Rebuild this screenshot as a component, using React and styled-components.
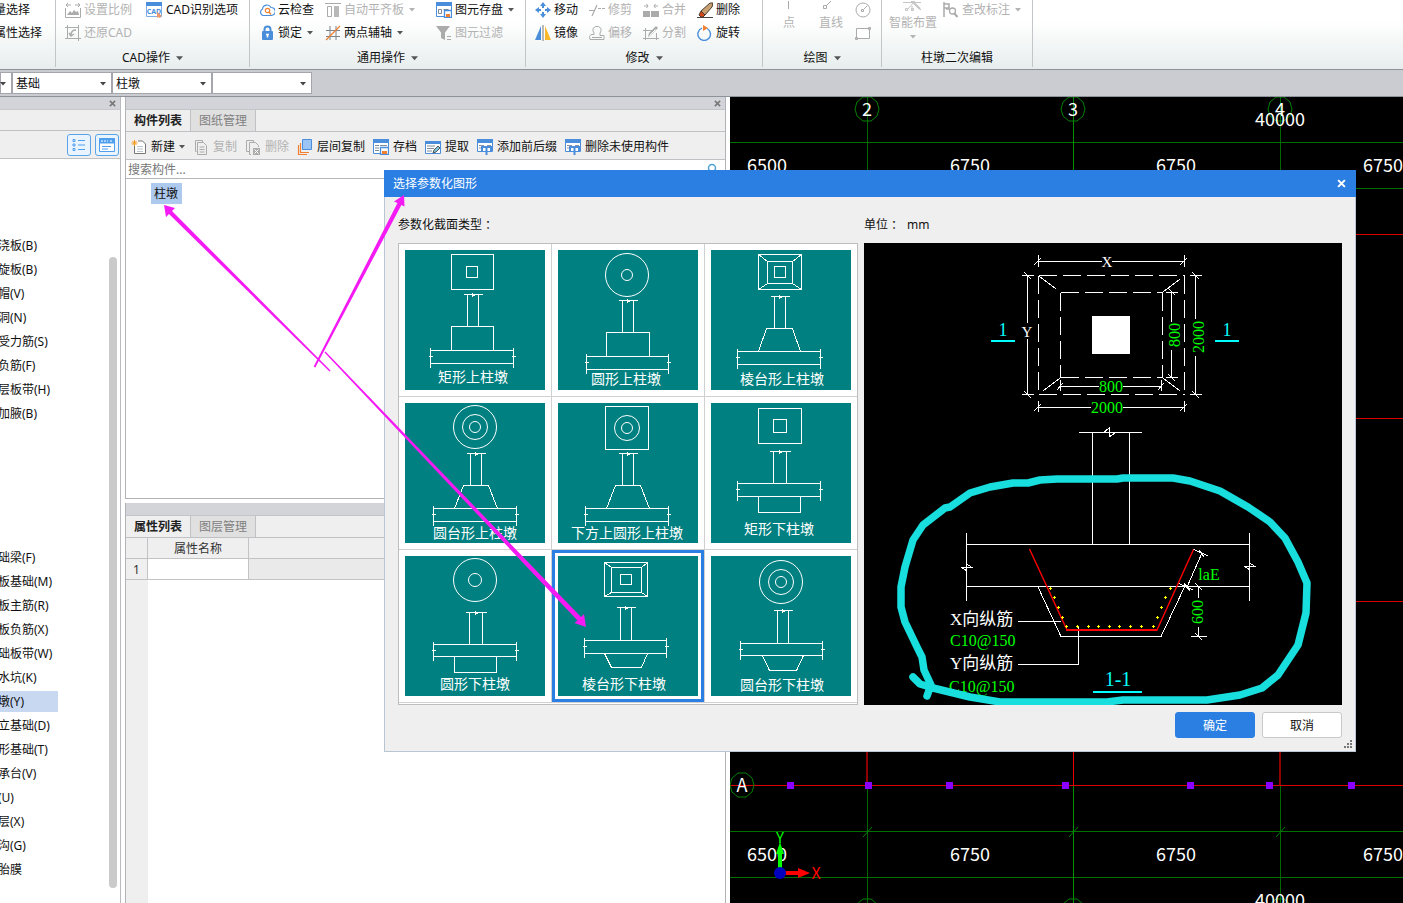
import React, { useState } from "react";
import styled, { createGlobalStyle, css } from "styled-components";

const GlobalStyle = createGlobalStyle`
  * {
    box-sizing: border-box;
  }
  body {
    margin: 0;
    font-family: "Noto Sans", "Noto Sans CJK SC", sans-serif;
    font-size: 12px;
    line-height: 18px;
    color: #111;
  }
  button, select, input {
    font: inherit;
    color: inherit;
  }
`;

const Shell = styled.div`
  position: relative;
  display: flex;
  flex-direction: column;
  height: 100vh;
  overflow: hidden;
  background: #fff;
`;

/* ribbon */
const Ribbon = styled.header`
  display: flex;
  height: 70px;
  flex: none;
  background: linear-gradient(#fff 30%, #e7eded);
  border-bottom: 1px solid #8e9196;
`;
const Group = styled.section`
  display: flex;
  flex-direction: column;
  justify-content: space-between;
  flex: none;
  width: ${(p) => p.$width}px;
  height: 67px;
  padding-top: 1px;
  border-right: 1px solid #c3c6c8;
  overflow: hidden;
`;
const GroupColumns = styled.div`
  display: flex;
  gap: ${(p) => p.$gap || 0}px;
  padding-left: ${(p) => p.$pad}px;
`;
const Column = styled.div`
  display: flex;
  flex-direction: column;
  align-items: ${(p) => (p.$center ? "center" : "flex-start")};
  gap: 5px;
  margin-right: ${(p) => p.$after || 0}px;
`;
const Tool = styled.button`
  display: flex;
  align-items: center;
  gap: ${(p) => p.$gap || 3}px;
  height: 18px;
  padding: 0;
  border: 0;
  background: none;
  white-space: nowrap;
  color: #111;
  &:disabled {
    color: #b2b2b2;
  }
`;
const CutTool = styled(Tool)`
  margin-left: -6px;
`;
const TallTool = styled(Tool)`
  flex-direction: column;
  gap: 3px;
  height: 42px;
`;
const GroupTitle = styled.div`
  display: flex;
  justify-content: center;
  align-items: center;
  gap: 6px;
  height: 18px;
  white-space: nowrap;
`;

/* floor / component selectors */
const SelectorBar = styled.div`
  display: flex;
  align-items: center;
  flex: none;
  height: 27px;
  background: #caccd1;
  border-bottom: 1px solid #8e9299;
`;
const SelectWrap = styled.label`
  position: relative;
  width: ${(p) => p.$width}px;
  svg {
    position: absolute;
    right: 6px;
    top: 10px;
    pointer-events: none;
  }
`;
const Select = styled.select`
  appearance: none;
  display: block;
  width: 100%;
  height: 22px;
  padding: 2px 3px 0;
  border: 1px solid #a4a6ab;
  border-radius: 0;
  background: #fff;
`;

/* workspace */
const Workspace = styled.main`
  display: flex;
  gap: 4px;
  flex: 1;
  min-height: 0;
`;
const Caption = styled.div`
  display: flex;
  align-items: center;
  justify-content: flex-end;
  flex: none;
  height: 12px;
  padding-right: 4px;
  background: #d3d4da;
`;
const CloseButton = styled.button`
  display: flex;
  padding: 0;
  border: 0;
  background: none;
`;
const Nav = styled.nav`
  display: flex;
  flex-direction: column;
  flex: none;
  width: 121px;
  border-right: 1px solid #b9bbc0;
`;
const NavHead = styled.div`
  flex: none;
  height: 22px;
  background: #efefef;
  border-top: 1px solid #c9c9cc;
  border-bottom: 1px solid #bfc1c5;
`;
const NavTools = styled.div`
  display: flex;
  justify-content: flex-end;
  align-items: center;
  gap: 4px;
  flex: none;
  height: 28px;
  padding-right: 1px;
  background: #efefef;
  border-bottom: 1px solid #bfc1c5;
`;
const ViewButton = styled.button`
  display: flex;
  align-items: center;
  justify-content: center;
  width: 24px;
  height: 22px;
  padding: 0;
  border: 1px solid #5aa4ea;
  border-radius: 3px;
  background: #eaf4fe;
`;
const NavBody = styled.div`
  display: flex;
  flex: 1;
  min-height: 0;
  padding-right: 3px;
  overflow: hidden;
`;
const NavLists = styled.div`
  flex: 1;
  padding-top: 74px;
`;
const NavList = styled.ul`
  margin: 0 0 120px;
  padding: 0;
  list-style: none;
`;
const NavItem = styled.li`
  display: flex;
  align-items: center;
  height: 24px;
  a {
    padding-right: ${(p) => (p.$active ? 34 : 0)}px;
    margin-left: -2px;
    line-height: 21px;
    color: #111;
    white-space: nowrap;
    text-decoration: none;
    background: ${(p) => (p.$active ? "#c8d8f0" : "none")};
  }
`;
const ScrollThumb = styled.div`
  width: 8px;
  margin: 98px 0 15px;
  border-radius: 4px;
  background: #cacaca;
`;

const Middle = styled.div`
  display: grid;
  grid-template-rows: 402fr 400fr;
  gap: 4px;
  flex: none;
  width: 601px;
`;
const Panel = styled.section`
  display: flex;
  flex-direction: column;
  min-height: 0;
  border: solid #b0b2b6;
  border-width: 0 1px ${(p) => (p.$closed ? 1 : 0)}px 1px;
`;
const Tabs = styled.div`
  display: flex;
  flex: none;
  height: 23px;
  background: #efefef;
  border-top: 1px solid #c3c6c9;
  border-bottom: 1px solid #bfc1c5;
`;
const Tab = styled.button`
  width: 65px;
  padding: 0;
  border: 0;
  border-right: 1px solid #bfc1c5;
  background: ${(p) => (p.$active ? "#efefef" : "#e0e0e0")};
  color: ${(p) => (p.$active ? "#222" : "#808080")};
  font-weight: ${(p) => (p.$active ? 700 : 400)};
`;
const ListTools = styled.div`
  display: flex;
  align-items: center;
  gap: 8px;
  flex: none;
  height: 28px;
  padding: 2px 0 0 5px;
  background: #efefef;
  border-bottom: 1px solid #bfc1c5;
`;
const SearchRow = styled.label`
  display: flex;
  align-items: center;
  flex: none;
  height: 19px;
  padding: 0 7px 0 2px;
  border-bottom: 1px solid #b4b6ba;
`;
const SearchInput = styled.input`
  flex: 1;
  height: 18px;
  padding: 2px 0 0;
  border: 0;
  outline: 0;
  &::placeholder {
    color: #777;
  }
`;
const Tree = styled.div`
  flex: 1;
  padding: 4px 25px;
`;
const TreeItem = styled.button`
  height: 21px;
  padding: 0 4px 0 3px;
  border: 0;
  background: #adc9ee;
`;
const PropertyArea = styled.div`
  flex: 1;
  background: linear-gradient(to right, #efefef 22px, #fff 22px);
`;
const PropertyTable = styled.table`
  width: 100%;
  table-layout: fixed;
  border-collapse: separate;
  border-spacing: 0;
  th, td {
    height: 21px;
    padding: 2px 0 0;
    border-right: 1px solid #c3c3c5;
    border-bottom: 1px solid #c3c3c5;
    font-weight: 400;
    line-height: 18px;
    color: #333;
  }
  th {
    background: #efefef;
  }
  td {
    background: #fff;
  }
  th:last-child, td:last-child {
    border-right: 0;
  }
  td:last-child {
    background: #eaeaea;
  }
`;

const Viewport = styled.div`
  flex: 1;
  min-width: 0;
  background: #000;
  overflow: hidden;
  svg {
    display: block;
  }
`;

/* dialog */
const Dialog = styled.div`
  position: absolute;
  left: 384px;
  right: 47px;
  top: 170px;
  background: #efefef;
  border: solid #b9c5d3;
  border-width: 0 1px 1px;
`;
const DialogTitle = styled.div`
  display: flex;
  align-items: center;
  justify-content: space-between;
  height: 27px;
  margin: 0 -1px;
  padding: 0 10px 0 9px;
  background: #2c7fe2;
  color: #fff;
`;
const DialogBody = styled.div`
  display: flex;
  gap: 6px;
  padding: 19px 13px 0;
`;
const Side = styled.div`
  flex: ${(p) => (p.$grow ? "1" : "none")};
  min-width: 0;
`;
const SideLabel = styled.div`
  display: flex;
  margin-bottom: 9px;
`;
const Colon = styled.span`
  margin-right: 7px;
  font-family: "Noto Sans CJK JP", sans-serif;
`;
const Gallery = styled.div`
  display: grid;
  grid-template-columns: 153px 153px 152px;
  padding-bottom: 1px;
  border: 1px solid #bdbdbd;
  background: #fff;
`;
const Shape = styled.button`
  display: block;
  height: 153px;
  padding: 6px;
  border: solid #d0d0d0;
  border-width: 0 1px 1px 0;
  background: #fff;
  text-align: left;
  &:nth-child(3n) {
    border-right: 0;
  }
  ${(p) =>
    p.$selected &&
    css`
      box-shadow: inset 0 0 0 3px #2c7fe2;
    `}
  svg {
    display: block;
    background: #008080;
  }
`;
const Preview = styled.div`
  height: 462px;
  background: #000;
  svg {
    display: block;
    margin: 0 auto;
  }
`;
const DialogFooter = styled.div`
  display: flex;
  justify-content: flex-end;
  gap: 7px;
  padding: 7px 13px 13px;
`;
const DialogButton = styled.button`
  width: 80px;
  height: 26px;
  padding: 2px 0 0;
  border: 1px solid ${(p) => (p.$primary ? "#2c7fe2" : "#c9c9c9")};
  border-radius: 3px;
  background: ${(p) => (p.$primary ? "#2c7fe2" : "#fff")};
  color: ${(p) => (p.$primary ? "#fff" : "#111")};
`;
const Grip = styled.svg`
  position: absolute;
  right: 3px;
  bottom: 3px;
`;
const Notes = styled.svg`
  position: absolute;
  left: 0;
  top: 0;
  pointer-events: none;
`;

const CaretSvg = styled.svg`
  flex: none;
  margin-left: ${(p) => p.$space}px;
`;

const Caret = ({ color = "#555", size = 6, space = 0 }) => (
  <CaretSvg $space={space} width={size} height={size - 2} viewBox="0 0 6 4">
    <path d="M0 0h6L3 3.500z" fill={color} />
  </CaretSvg>
);

const Cross = ({ color = "#777", size = 7 }) => (
  <svg width={size} height={size} viewBox="0 0 8 8">
    <path d="M1 1l6 6M7 1L1 7" stroke={color} strokeWidth="1.8" />
  </svg>
);

const BLUE = "#4a8edb";
const GREY = "#ababab";
const ORANGE = "#f08030";

const windowFrame = (
  <>
    <path d="M.5 3v11.500h15V3" fill="#fff" stroke={BLUE} />
    <path d="M0 0h16v4H0z" fill={BLUE} />
  </>
);

const icons = {
  scale: (
    <>
      <path d="M1 3h5M3 1L1 3l2 2M15 3h-5M13 1l2 2-2 2" stroke={GREY} />
      <path d="M.5 6v9.500h15V6" stroke={GREY} />
      <path d="M2 13l3-4 2 2 2-3 2 2 2-1 1 4z" fill={GREY} />
    </>
  ),
  restore: (
    <>
      <path d="M2.500 0v13.500H16M0 2.500h13.500V16M0 13.500h4M13.500 0v3" stroke={GREY} />
      <path d="M11 5c-3 0-5 2-5 5M4 8l2 3 3-2" stroke={GREY} strokeWidth="1.500" />
    </>
  ),
  cad: (
    <>
      <path d="M.5 4v10.500h15V4" fill="#fff" stroke="#7faee6" />
      <path d="M0 0h16v4H0z" fill={BLUE} />
      <text x="8" y="12" fontSize="7" fontWeight="700" textAnchor="middle" fill={BLUE}>CAD</text>
      <path d="M11 10l5 4-2 .5 1 2-1 .5-1-2-2 1z" fill="#f0946a" />
    </>
  ),
  cloud: (
    <>
      <path d="M4 13.500a3.500 3.500 0 0 1-.5-6.500 4.500 4.500 0 0 1 8.500-1.500 4 4 0 0 1 .5 8z" stroke={BLUE} strokeWidth="1.200" />
      <circle cx="8.500" cy="8.500" r="2.200" stroke={ORANGE} strokeWidth="1.200" />
      <path d="M10 10l2 2.500" stroke={ORANGE} strokeWidth="1.300" />
    </>
  ),
  lock: (
    <>
      <path d="M5.500 7V4.500a3 3 0 0 1 6 0V7" stroke={BLUE} strokeWidth="2" />
      <rect x="3" y="6" width="11" height="9" rx="1" fill={BLUE} />
      <path d="M8.500 9v3.500M7 9.500h3" stroke="#fff" strokeWidth="1.500" />
    </>
  ),
  align: (
    <>
      <path d="M0 1.500h16M2.500 4.500h4v10h-4z" stroke={GREY} />
      <path d="M9 4h5v11H9z" fill="#b9b9b9" />
    </>
  ),
  axis: (
    <>
      <path d="M5 1v14M11 1v14M1 5.500h14M1 11.500h14" stroke="#7a828c" />
      <path d="M1 15L15 1" stroke={ORANGE} strokeWidth="1.300" />
    </>
  ),
  store: (
    <>
      {windowFrame}
      <path d="M2.500 7.500h3v4h-3zM7.500 7.500h5" stroke="#7c8b9a" />
      <path d="M8.500 8.500h7v7h-7z" fill="#fff" stroke={BLUE} strokeWidth="1.300" />
      <path d="M10 12h4v3h-4z" fill={ORANGE} />
    </>
  ),
  filter: (
    <>
      <path d="M0 1h14L9 7.500V15l-4-2V7.500z" fill={GREY} />
      <path d="M11 11.500h4M11 14.500h4" stroke={GREY} />
    </>
  ),
  move: (
    <>
      <path d="M8 3v3M8 10v3M3 8h3M10 8h3" stroke={BLUE} strokeWidth="2" />
      <path d="M8 0l3 4H5zM8 16l3-4H5zM0 8l4-3v6zM16 8l-4-3v6z" fill={BLUE} />
    </>
  ),
  mirror: (
    <>
      <path d="M6 1v14H0z" fill={BLUE} />
      <path d="M10 1v14h6z" fill="#fbb929" />
      <path d="M8 0v16" stroke="#777" />
    </>
  ),
  trim: <path d="M0 8.500h5M3 14L8 3M9 6.500h3M13 6.500h3" stroke={GREY} strokeWidth="1.200" />,
  offset: (
    <>
      <path d="M1 14.500h14v-4h-4V8l1-2V3.500L9.500 1.500h-3L4 3.500V6l1 2v1.500H2l-1.500 2z" stroke={GREY} />
      <path d="M3 12.500h10" stroke={GREY} />
    </>
  ),
  merge: (
    <>
      <path d="M1 4h4M3.500 2L5 4 3.500 6M15 4h-4M12.500 2L11 4l1.500 2" stroke={GREY} />
      <path d="M0 9h7v6H0zM8 9h8v6H8z" fill={GREY} />
    </>
  ),
  split: (
    <>
      <path d="M2.500 3v12M0 5.500h10M0 13.500h16M13.500 8v7" stroke={GREY} />
      <path d="M5 12l1-4 7-7 2 2-7 7z" fill={GREY} />
      <path d="M6.500 10.500l6-6" stroke="#fff" />
    </>
  ),
  erase: (
    <>
      <path d="M0 15.500h16" stroke="#444" />
      <path d="M4 9l9-8 3 0-1 4-7 8z" fill="#c7a174" stroke="#4b3a2c" />
      <path d="M4 9l4 4-2 2H4l-2-2z" fill="#d9481c" stroke="#4b3a2c" />
    </>
  ),
  rotate: (
    <>
      <path d="M10 3.500A6.300 6.300 0 1 1 5 3.200" stroke={BLUE} strokeWidth="1.400" />
      <path d="M6 0l5 3-5 3z" fill={ORANGE} />
    </>
  ),
  point: <path d="M7.500 0v8" stroke={GREY} />,
  line: <path d="M.5 7.500h3v-3h-3zM3 5l6-6" stroke={GREY} />,
  circle: (
    <>
      <circle cx="8" cy="8" r="7" stroke={GREY} />
      <path d="M6.500 7.500h2v2h-2zM9 7l3-3" stroke={GREY} />
    </>
  ),
  rect: <path d="M1.500 3.500h13v10h-13zM13.500 2.500h2v2h-2zM.5 12.500h2v2h-2z" fill="#fff" stroke={GREY} />,
  smart: (
    <>
      <path d="M0 1.500h9M12 1.500h6M4 9L12 0M9 5v4M8 0l10 9" stroke="#c4c4c4" />
      <path d="M9 0l8 8" stroke="#c4c4c4" strokeWidth="2" />
      <path d="M2.500 7.500h2v2h-2zM8.500 7.500h2v2h-2z" stroke="#c4c4c4" />
    </>
  ),
  check: (
    <>
      <path d="M1 0v15M1 2h5v4H1M3 7h3" stroke={GREY} strokeWidth="1.500" />
      <circle cx="9.500" cy="9" r="3" stroke={GREY} strokeWidth="1.300" />
      <path d="M11.500 11.500l3 3.500" stroke={GREY} strokeWidth="2" />
    </>
  ),
  create: (
    <>
      <path d="M3.500 4.500v10h11V5l-3-3H7" fill="#fff" stroke="#777" />
      <path d="M6 7.500h6M6 10h6M6 12.500h6" stroke="#bcc5cf" />
      <path d="M3.500 1v6M.5 4h6M1.500 2l4 4M5.500 2l-4 4" stroke="#f59b22" />
    </>
  ),
  copy: <path d="M3.500 12.500h-1V1.500h7v2M4.500 3.500h6l3 3v9h-9zM6.500 8h5M6.500 10.500h5M6.500 13h5" stroke={GREY} />,
  remove: (
    <>
      <path d="M4 12.500H1.500V1.500h7v2M6 15.500H4.500v-12h6l3 3V8" stroke={GREY} />
      <path d="M8 9h7v7H8z" fill={GREY} />
      <path d="M9.500 10.500l4 4M13.500 10.500l-4 4" stroke="#fff" />
    </>
  ),
  layers: (
    <>
      <path d="M1.500 6v9.500H10M3.500 4v9.500H12" stroke={ORANGE} strokeWidth="1.200" />
      <path d="M5.500 .5h9v10h-9z" fill="#9cc5f5" stroke={BLUE} />
    </>
  ),
  archive: (
    <>
      {windowFrame}
      <path d="M2 6.500h4M2 9h4M2 11.500h4M7 6.500h7" stroke="#7c8b9a" />
      <path d="M7.500 8.500h8v7h-8z" fill="#fff" stroke={BLUE} strokeWidth="1.300" />
      <path d="M9 12h5v3H9z" fill={ORANGE} />
    </>
  ),
  extract: (
    <>
      <path d="M.5 4v10.500h15V4" fill="#fff" stroke={BLUE} />
      <path d="M0 2h16v3H0z" fill={BLUE} />
      <path d="M2 7h8M2 9.500h7M2 12h5" stroke="#7c8b9a" />
      <path d="M8 14l1-3 4-4 2 2-4 4z" fill="#7cc4dd" stroke="#555" />
    </>
  ),
  affix: (
    <>
      <path d="M.5 3v9.500h15V3" fill="#fff" stroke={BLUE} />
      <path d="M0 0h16v4H0z" fill={BLUE} />
      <path d="M2 6.500h5M2 9h3M10 6.500h4" stroke="#8995a3" />
      <path d="M4 8h11M9.500 8v8M5 8v5M14 8v5" stroke={BLUE} strokeWidth="2" />
    </>
  ),
};

const Icon = ({ name, w = 16, h = 16 }) => (
  <svg width={w} height={h} viewBox={`0 0 ${name === "smart" ? 20 : 16} ${h}`} fill="none">
    {icons[name]}
  </svg>
);

const RibbonTool = ({ icon, label, off, menu, w }) => (
  <Tool disabled={off}>
    <Icon name={icon} w={w} />
    {label}
    {menu && <Caret space={2} color={off ? "#b2b2b2" : "#555"} />}
  </Tool>
);

const Title = ({ children, menu = true }) => (
  <GroupTitle>
    {children}
    {menu && <Caret size={7} />}
  </GroupTitle>
);

const editTools = [
  [["move", "移动"], ["mirror", "镜像"]],
  [["trim", "修剪", true], ["offset", "偏移", true]],
  [["merge", "合并", true], ["split", "分割", true]],
  [["erase", "删除"], ["rotate", "旋转"]],
];

const listTools = [
  ["create", "新建", false, true],
  ["copy", "复制", true],
  ["remove", "删除", true],
  ["layers", "层间复制"],
  ["archive", "存档"],
  ["extract", "提取"],
  ["affix", "添加前后缀"],
  ["affix", "删除未使用构件"],
];

const navGroups = [
  ["浇板(B)", "旋板(B)", "帽(V)", "洞(N)", "受力筋(S)", "负筋(F)", "层板带(H)", "加腋(B)"],
  [
    "础梁(F)", "板基础(M)", "板主筋(R)", "板负筋(X)", "础板带(W)", "水坑(K)", "墩(Y)",
    "立基础(D)", "形基础(T)", "承台(V)", "(U)", "层(X)", "沟(G)", "胎膜",
  ],
];

// rects: [x, y, w, h], circles: [cx, cy, ...radii], col and slab: [left, right, top, bottom]
const shapes = [
  { name: "矩形上柱墩", rects: [[46, 4, 42, 35], [61, 16, 11, 11]], col: [62, 73, 44, 76], slab: [25, 108, 100, 113], base: "46,100 46,76 88,76 88,100", label: [68, 132] },
  { name: "圆形上柱墩", circles: [69, 25, 21.5, 5.5], col: [64, 75, 50, 82], slab: [28, 110, 106, 119], base: "48,106 48,82 91,82 91,106", label: [68, 134] },
  { name: "棱台形上柱墩", rects: [[47, 4, 43, 35], [56, 11, 25, 22], [63, 16, 11, 11]], hips: true, col: [63, 74, 46, 78], slab: [26, 109, 101, 114], base: "47,101 55,78 81,78 89,101", label: [71, 134] },
  { name: "圆台形上柱墩", circles: [70, 24, 21.5, 12.5, 5.5], col: [65, 76, 50, 82], slab: [28, 111, 105, 118], base: "49,105 58,82 83,82 92,105", label: [70, 135] },
  { name: "下方上圆形上柱墩", rects: [[47, 3, 43, 43]], circles: [69, 25, 12.5, 5.5], col: [64, 75, 50, 82], slab: [27, 110, 105, 118], base: "48,105 57,82 82,82 91,105", label: [69, 135] },
  { name: "矩形下柱墩", rects: [[47, 5, 43, 35], [62, 16, 13, 13]], col: [62, 75, 48, 80], slab: [26, 109, 80, 93], base: "47,93 47,109 89,109 89,93", label: [68, 131] },
  { name: "圆形下柱墩", circles: [70, 24, 21.5, 6.5], col: [64, 77, 56, 88], slab: [28, 111, 88, 100], base: "49,100 49,116 91,116 91,100", label: [70, 133] },
  { name: "棱台形下柱墩", rects: [[46, 6, 43, 34], [53, 11, 30, 25], [62, 18, 11, 10]], hips: true, col: [62, 73, 51, 84], slab: [26, 108, 84, 97], base: "46,97 53,111 83,111 89,97", label: [66, 133] },
  { name: "圆台形下柱墩", circles: [70, 26, 21.5, 12.5, 5.5], col: [66, 77, 54, 87], slab: [29, 111, 87, 99], base: "51,99 58,114 85,114 92,99", label: [71, 134] },
];

const ShapeDrawing = ({ shape }) => {
  const { rects = [], circles = [], hips, col, slab, base, label } = shape;
  const [cx, cy, ...radii] = circles;
  const [cl, cr, ct, cb] = col;
  const [sl, sr, st, sb] = slab;
  const mid = Math.floor((cl + cr) / 2);
  const sm = Math.floor((st + sb) / 2);
  const [a, b] = rects;
  return (
    <svg width="140" height="140" viewBox="0 0 140 140">
      <g transform="translate(.5 .5)" fill="none" stroke="#fff" shapeRendering="crispEdges">
        {rects.map(([x, y, w, h]) => (
          <rect key={x + y} x={x} y={y} width={w} height={h} />
        ))}
        {radii.map((r) => (
          <circle key={r} cx={cx - 0.5} cy={cy - 0.5} r={r} shapeRendering="auto" />
        ))}
        {hips && (
          <path
            d={`M${a[0]} ${a[1]}L${b[0]} ${b[1]}M${a[0] + a[2]} ${a[1]}L${b[0] + b[2]} ${b[1]}M${a[0]} ${a[1] + a[3]}L${b[0]} ${b[1] + b[3]}M${a[0] + a[2]} ${a[1] + a[3]}L${b[0] + b[2]} ${b[1] + b[3]}`}
          />
        )}
        <path d={`M${cl - 4} ${ct}H${cr + 4}M${mid - 1} ${ct + 1}h3M${mid} ${ct - 2}v4M${cl} ${ct}V${cb}M${cr} ${ct}V${cb}`} />
        <path d={`M${sl} ${st}H${sr}M${sl} ${sb}H${sr}M${sl} ${st - 3}V${sb + 4}M${sr} ${st - 3}V${sb + 4}M${sl - 2} ${sm}h4M${sr - 2} ${sm}h4`} />
        <polyline points={base} />
      </g>
      <text x={label[0]} y={label[1]} textAnchor="middle" fontSize="14" fill="#fff" fontFamily="Noto Sans CJK SC">
        {shape.name}
      </text>
    </svg>
  );
};

const rebar = [
  [1050, 588], [1054, 597], [1058, 607], [1062, 617], [1066, 626], [1077, 626], [1088, 626],
  [1098, 626], [1109, 626], [1119, 626], [1130, 626], [1141, 626], [1153, 626], [1157, 617],
  [1161, 607], [1165, 597], [1170, 588],
];

const SectionDrawing = () => (
  <svg width="478" height="462" viewBox="864 243 478 462" fontFamily="Liberation Serif, Noto Sans CJK SC, serif">
    <g fill="none" stroke="#fff" shapeRendering="crispEdges">
      <path d="M1038.500 275.500H1184.500M1038.500 394.500H1184.500M1038.500 275.500V394.500M1184.500 275.500V394.500M1060.500 292.500H1162.500M1060.500 377.500H1162.500M1060.500 292.500V377.500M1162.500 292.500V377.500" strokeDasharray="18 6" />
      <path d="M1039 276l17 13M1163 292l17-13M1043 391l17-13M1163 378l17 13" />
      <path d="M1038.500 261.500H1102M1112 261.500H1184.500M1038.500 255v12M1184.500 255v12M1034 265l7-7M1180 265l7-7" />
      <path d="M1027.500 275.500V323M1027.500 339V394.500M1022 275.500h12M1022 394.500h12M1024 272l7 7M1024 391l7 7" />
      <path d="M1171.500 292.500V322M1171.500 350V377.500M1166 292.500h12M1166 377.500h12M1168 288l7 7M1168 374l7 7" />
      <path d="M1195.500 275.500V319M1195.500 356V394.500M1190 275.500h12M1190 394.500h12M1192 272l7 7M1192 391l7 7" />
      <path d="M1060.500 386.500H1099M1123 386.500H1161.500M1060.500 380v11M1161.500 380v11M1057 390l6-7M1158 390l6-7" />
      <path d="M1038.500 407.500H1091M1123 407.500H1184.500M1038.500 401v11M1184.500 401v11M1034 411l7-7M1180 411l7-7" />
      <path d="M1079 432.500H1142M1103 433l6-5v9l6-4M1092.500 432V544M1129.500 432V544" />
      <path d="M966 544.500H1249M966 586.500H1249M966.500 533V601M1249.500 533V601" />
      <path d="M961 567.500h11l-6-4M961 567l6 4M1244 566.500h11l-6-4M1244 566l6 4" />
      <path d="M1038 587L1061 636.500H1161L1184.500 587" />
      <path d="M1202 553L1187 587M1193 549l15 7M1178 583l15 7M1199 550l5 7M1184 583l6 8" />
      <path d="M1198.500 586V598M1198.500 627V636M1191 636.500h16M1195 583l7 7M1195 633l7 7" />
      <path d="M1018 621.500H1061M1018 664.500H1078.500V627" />
    </g>
    <rect x="1092" y="316" width="38" height="38" fill="#fff" />
    <path d="M1029.500 549L1067 630H1157L1193.500 549.500" fill="none" stroke="#f00" strokeWidth="1.400" />
    <path d="M1066 630H1157" stroke="#f00" strokeWidth="2" />
    {rebar.map(([x, y]) => (
      <path key={`${x}-${y}`} d={`M${x - 1} ${y + 0.5}h3M${x + 0.5} ${y - 1}v3`} stroke="#ff0" />
    ))}
    <g fill="#fff" fontSize="15" textAnchor="middle">
      <text x="1107" y="267">X</text>
      <text x="1027" y="337">Y</text>
    </g>
    <g fill="#0f0" fontSize="16" textAnchor="middle">
      <text x="1111" y="392">800</text>
      <text x="1107" y="413">2000</text>
      <text transform="translate(1180 335) rotate(-90)">800</text>
      <text transform="translate(1204 337) rotate(-90)">2000</text>
      <text transform="translate(1203 612) rotate(-90)">600</text>
      <text x="1209" y="580">laE</text>
    </g>
    <g fill="#0f0" fontSize="16">
      <text x="950" y="646">C10@150</text>
      <text x="949" y="692">C10@150</text>
    </g>
    <g fill="#fff" fontSize="17">
      <text x="950" y="625">X向纵筋</text>
      <text x="950" y="669">Y向纵筋</text>
    </g>
    <g fill="#0ff" fontSize="18" textAnchor="middle">
      <text x="1003" y="336">1</text>
      <text x="1227" y="336">1</text>
      <text x="1118" y="686" fontSize="20">1-1</text>
    </g>
    <path d="M991 341H1015M1215 341H1239M1093 692H1142" stroke="#0ff" strokeWidth="2" />
    <path
      d="M913 677l7 7 13 4 37 9 30 5h107l16-2h84l33-5 22-7 16-13 20-30 8-32 1-30-9-21-13-24-15-16-22-15-28-16-30-10-17-3h-50l-6 1h-60l-17 1-12 3h-15l-23 4-20 6-20 14-5 1-22 17-10 15-8 27-4 20v20l4 15 12 25 5 10 2 13 7 15-4 11"
      fill="none"
      stroke="#18dede"
      strokeWidth="7.500"
      strokeLinecap="round"
      strokeLinejoin="round"
    />
  </svg>
);

const octagon = (cx, cy) =>
  [[-4, -12], [4, -12], [10, -7], [12, 0], [10, 7], [4, 12], [-4, 12], [-10, 7], [-12, 0], [-10, -7]]
    .map(([x, y]) => `${cx + x},${cy + y}`)
    .join(" ");

const columnsX = [137, 343, 550];

const CadCanvas = () => (
  <Viewport>
    <svg width="100%" height="100%" fontFamily="Noto Sans CJK SC" fontSize="18">
      {[45, 91, 734, 780].map((y) => (
        <rect key={y} y={y} width="100%" height="1" fill="#007000" />
      ))}
      {columnsX.map((x, i) => (
        <g key={x} fill="none" stroke="#008000">
          <rect x={x} y="0" width="1" height="100%" fill={i === 1 ? "#009000" : "#006800"} stroke="none" />
          <path d={`M${x - 4} 740l9-10`} />
          <polygon points={octagon(x, 12)} />
          <polygon points={octagon(x, 814)} />
        </g>
      ))}
      {[137, 321, 504, 688].map((y) => (
        <rect key={y} y={y} width="100%" height="1" fill="#d80000" />
      ))}
      {columnsX.map((x, i) => (
        <rect key={x} x={i === 1 ? x : x - 1} y="137" width={i === 1 ? 1 : 2} height="551" fill={i === 1 ? "#f00000" : "#900000"} />
      ))}
      <polygon points={octagon(12, 688)} fill="none" stroke="#008000" />
      {[60, 138, 219, 335, 460, 539, 621].map((x) => (
        <rect key={x} x={x - 3} y="685" width="7" height="7" fill="#8a00ff" />
      ))}
      <g fill="#fff" textAnchor="middle">
        <text x="137" y="19">2</text>
        <text x="343" y="19">3</text>
        <text x="550" y="19">4</text>
        <text x="550" y="29">40000</text>
        <text x="12" y="695">A</text>
        {[37, 240, 446, 653].map((x) => (
          <React.Fragment key={x}>
            <text x={x} y="75">{x === 37 ? "6500" : "6750"}</text>
            <text x={x} y="764">{x === 37 ? "6500" : "6750"}</text>
          </React.Fragment>
        ))}
        <text x="550" y="810">40000</text>
      </g>
      <path d="M50 774V755" stroke="#0f0" strokeWidth="4" />
      <path d="M50 745l4 12h-8z" fill="#0f0" />
      <path d="M52 776H70" stroke="#f00" strokeWidth="4" />
      <path d="M80 776l-12-5v10z" fill="#f00" />
      <circle cx="50" cy="776" r="6" fill="#0000c0" />
      <text x="50" y="746" fontSize="15" textAnchor="middle" fill="#0f0">Y</text>
      <text x="86" y="782" fontSize="16" textAnchor="middle" fill="#f00">X</text>
    </svg>
  </Viewport>
);

const ShapeDialog = () => {
  const [selected, setSelected] = useState(7);
  return (
    <Dialog role="dialog" aria-label="选择参数化图形">
      <DialogTitle>
        选择参数化图形
        <CloseButton aria-label="关闭">
          <Cross color="#fff" size={9} />
        </CloseButton>
      </DialogTitle>
      <DialogBody>
        <Side>
          <SideLabel>
            参数化截面类型<Colon>：</Colon>
          </SideLabel>
          <Gallery>
            {shapes.map((shape, i) => (
              <Shape key={shape.name} $selected={i === selected} aria-pressed={i === selected} onClick={() => setSelected(i)}>
                <ShapeDrawing shape={shape} />
              </Shape>
            ))}
          </Gallery>
        </Side>
        <Side $grow>
          <SideLabel>
            单位<Colon>：</Colon>mm
          </SideLabel>
          <Preview>
            <SectionDrawing />
          </Preview>
        </Side>
      </DialogBody>
      <DialogFooter>
        <DialogButton $primary>确定</DialogButton>
        <DialogButton>取消</DialogButton>
      </DialogFooter>
      <Grip width="8" height="8" fill="#777">
        <path d="M6 0h2v2H6zM3 3h2v2H3zM6 3h2v2H6zM0 6h2v2H0zM3 6h2v2H3zM6 6h2v2H6z" />
      </Grip>
    </Dialog>
  );
};

const App = () => {
  return (
    <Shell>
      <GlobalStyle />
      <Ribbon>
        <Group $width={56}>
          <GroupColumns $pad={0}>
            <Column>
              <CutTool>量选择</CutTool>
              <CutTool>属性选择</CutTool>
            </Column>
          </GroupColumns>
        </Group>
        <Group $width={194}>
          <GroupColumns $pad={9} $gap={13}>
            <Column>
              <RibbonTool icon="scale" label="设置比例" off />
              <RibbonTool icon="restore" label="还原CAD" off />
            </Column>
            <Column>
              <RibbonTool icon="cad" label="CAD识别选项" w={18} />
            </Column>
          </GroupColumns>
          <Title>CAD操作</Title>
        </Group>
        <Group $width={276}>
          <GroupColumns $pad={9}>
            <Column $after={11}>
              <RibbonTool icon="cloud" label="云检查" />
              <RibbonTool icon="lock" label="锁定" menu />
            </Column>
            <Column $after={21}>
              <RibbonTool icon="align" label="自动平齐板" off menu />
              <RibbonTool icon="axis" label="两点辅轴" menu />
            </Column>
            <Column>
              <RibbonTool icon="store" label="图元存盘" menu />
              <RibbonTool icon="filter" label="图元过滤" off />
            </Column>
          </GroupColumns>
          <Title>通用操作</Title>
        </Group>
        <Group $width={237}>
          <GroupColumns $pad={9} $gap={11}>
            {editTools.map((column) => (
              <Column key={column[0][0]}>
                {column.map(([icon, label, off]) => (
                  <RibbonTool key={icon} icon={icon} label={label} off={off} />
                ))}
              </Column>
            ))}
          </GroupColumns>
          <Title>修改</Title>
        </Group>
        <Group $width={119}>
          <GroupColumns $pad={18} $gap={12}>
            <Column $after={10}>
              <TallTool disabled>
                <Icon name="point" h={10} />
                点
              </TallTool>
            </Column>
            <Column>
              <TallTool disabled>
                <Icon name="line" h={10} />
                直线
              </TallTool>
            </Column>
            <Column>
              <Tool disabled aria-label="圆">
                <Icon name="circle" />
              </Tool>
              <Tool disabled aria-label="矩形">
                <Icon name="rect" />
              </Tool>
            </Column>
          </GroupColumns>
          <Title>绘图</Title>
        </Group>
        <Group $width={151}>
          <GroupColumns $pad={7} $gap={6}>
            <Column $center>
              <TallTool disabled>
                <Icon name="smart" w={24} h={10} />
                智能布置
                <Caret color="#b2b2b2" />
              </TallTool>
            </Column>
            <Column>
              <RibbonTool icon="check" label="查改标注" off menu />
            </Column>
          </GroupColumns>
          <Title menu={false}>柱墩二次编辑</Title>
        </Group>
      </Ribbon>

      <SelectorBar>
        <SelectWrap $width={12}>
          <Select aria-label="楼层" />
          <Caret color="#444" />
        </SelectWrap>
        <SelectWrap $width={100}>
          <Select aria-label="类别">
            <option>基础</option>
          </Select>
          <Caret color="#444" />
        </SelectWrap>
        <SelectWrap $width={100}>
          <Select aria-label="构件类型">
            <option>柱墩</option>
          </Select>
          <Caret color="#444" />
        </SelectWrap>
        <SelectWrap $width={100}>
          <Select aria-label="构件" />
          <Caret color="#444" />
        </SelectWrap>
      </SelectorBar>

      <Workspace>
        <Nav>
          <Caption>
            <CloseButton aria-label="关闭导航">
              <Cross />
            </CloseButton>
          </Caption>
          <NavHead />
          <NavTools>
            <ViewButton aria-label="列表视图">
              <svg width="14" height="14" fill="none" stroke="#4f9ff0">
                <path d="M1 1.500h2v2H1zM1 6h2v2H1zM1 10.500h2v2H1zM6 2.500h7M6 7h7M6 11.500h7" />
              </svg>
            </ViewButton>
            <ViewButton aria-label="窗口视图">
              <svg width="16" height="14" fill="none" stroke="#4f9ff0">
                <path d="M.5.5h15v13H.5z" fill="#fff" />
                <path d="M0 3h16" strokeWidth="5" />
                <path d="M2 3h7M11 3h3" stroke="#fff" strokeDasharray="2 1" />
                <path d="M3 8.500h9M3 11h6" />
              </svg>
            </ViewButton>
          </NavTools>
          <NavBody>
            <NavLists>
              {navGroups.map((items) => (
                <NavList key={items[0]}>
                  {items.map((item) => (
                    <NavItem key={item} $active={item === "墩(Y)"}>
                      <a href="#">{item}</a>
                    </NavItem>
                  ))}
                </NavList>
              ))}
            </NavLists>
            <ScrollThumb />
          </NavBody>
        </Nav>

        <Middle>
          <Panel $closed>
            <Caption>
              <CloseButton aria-label="关闭构件列表">
                <Cross />
              </CloseButton>
            </Caption>
            <Tabs>
              <Tab $active>构件列表</Tab>
              <Tab>图纸管理</Tab>
            </Tabs>
            <ListTools>
              {listTools.map(([icon, label, off, menu]) => (
                <Tool key={label} $gap={4} disabled={off}>
                  <Icon name={icon} />
                  {label}
                  {menu && <Caret />}
                </Tool>
              ))}
            </ListTools>
            <SearchRow>
              <SearchInput placeholder="搜索构件..." aria-label="搜索构件" />
              <svg width="12" height="12" fill="none" stroke="#4ba3d8" strokeWidth="1.500">
                <circle cx="6" cy="5" r="3.500" />
                <path d="M8 8l3 3" />
              </svg>
            </SearchRow>
            <Tree>
              <TreeItem>柱墩</TreeItem>
            </Tree>
          </Panel>
          <Panel>
            <Caption />
            <Tabs>
              <Tab $active>属性列表</Tab>
              <Tab>图层管理</Tab>
            </Tabs>
            <PropertyArea>
              <PropertyTable>
                <colgroup>
                  <col width="22" />
                  <col width="101" />
                  <col />
                </colgroup>
                <thead>
                  <tr>
                    <th />
                    <th>属性名称</th>
                    <th />
                  </tr>
                </thead>
                <tbody>
                  <tr>
                    <th>1</th>
                    <td />
                    <td />
                  </tr>
                </tbody>
              </PropertyTable>
            </PropertyArea>
          </Panel>
        </Middle>

        <CadCanvas />
      </Workspace>

      <ShapeDialog />

      <Notes width="600" height="640" fill="#f31af3">
        <polygon points="330.5,370.5 172,211 175,208 164,205 166,217 169,214 329.5,371.5" />
        <polygon points="315.3,367.4 401.4,205 404.500,206.5 404,195 394,201.5 397.5,203 313.7,366.6" />
        <polygon points="325.5,351.5 581,617 584,614 586,627 574.5,623 577.5,620.5 324.5,352.5" />
      </Notes>
    </Shell>
  );
};

export default App;
